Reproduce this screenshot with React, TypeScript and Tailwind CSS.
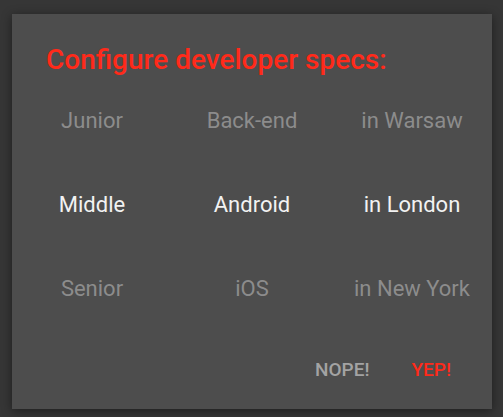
const rows = [
  ["Junior", "Back-end", "in Warsaw"],
  ["Middle", "Android", "in London"],
  ["Senior", "iOS", "in New York"],
];

export default function App() {
  return (
    <div
      className="w-full h-[417px] bg-[#363636] pt-[14px] pl-[12px] pr-[11px]"
      style={{ fontFamily: "Roboto, 'Liberation Sans', sans-serif" }}
    >
      <div className="h-[395px] bg-[#4d4d4d] shadow-[0_2px_10px_rgba(0,0,0,0.45)] flex flex-col pt-[30px] pb-[19px]">
        <h1 className="pl-[34px] text-[28px] leading-[32px] font-medium text-[#ff2a1a]">
          Configure developer specs:
        </h1>
        <div className="mt-[2px] grid grid-cols-3">
          {rows.map((row, i) =>
            row.map((label) => (
              <div
                key={label}
                className={
                  "h-[84px] flex items-center justify-center text-[22px] " +
                  (i === 1 ? "text-[#f2f2f2]" : "text-[#8c8c8c]")
                }
              >
                {label}
              </div>
            ))
          )}
        </div>
        <div className="mt-auto flex justify-end items-center gap-[10px] pr-[25px]">
          <button className="h-[40px] px-[16px] text-[19px] font-medium text-[#a3a3a3]">NOPE!</button>
          <button className="h-[40px] px-[16px] text-[19px] font-medium text-[#ff2a1a]">YEP!</button>
        </div>
      </div>
    </div>
  );
}
